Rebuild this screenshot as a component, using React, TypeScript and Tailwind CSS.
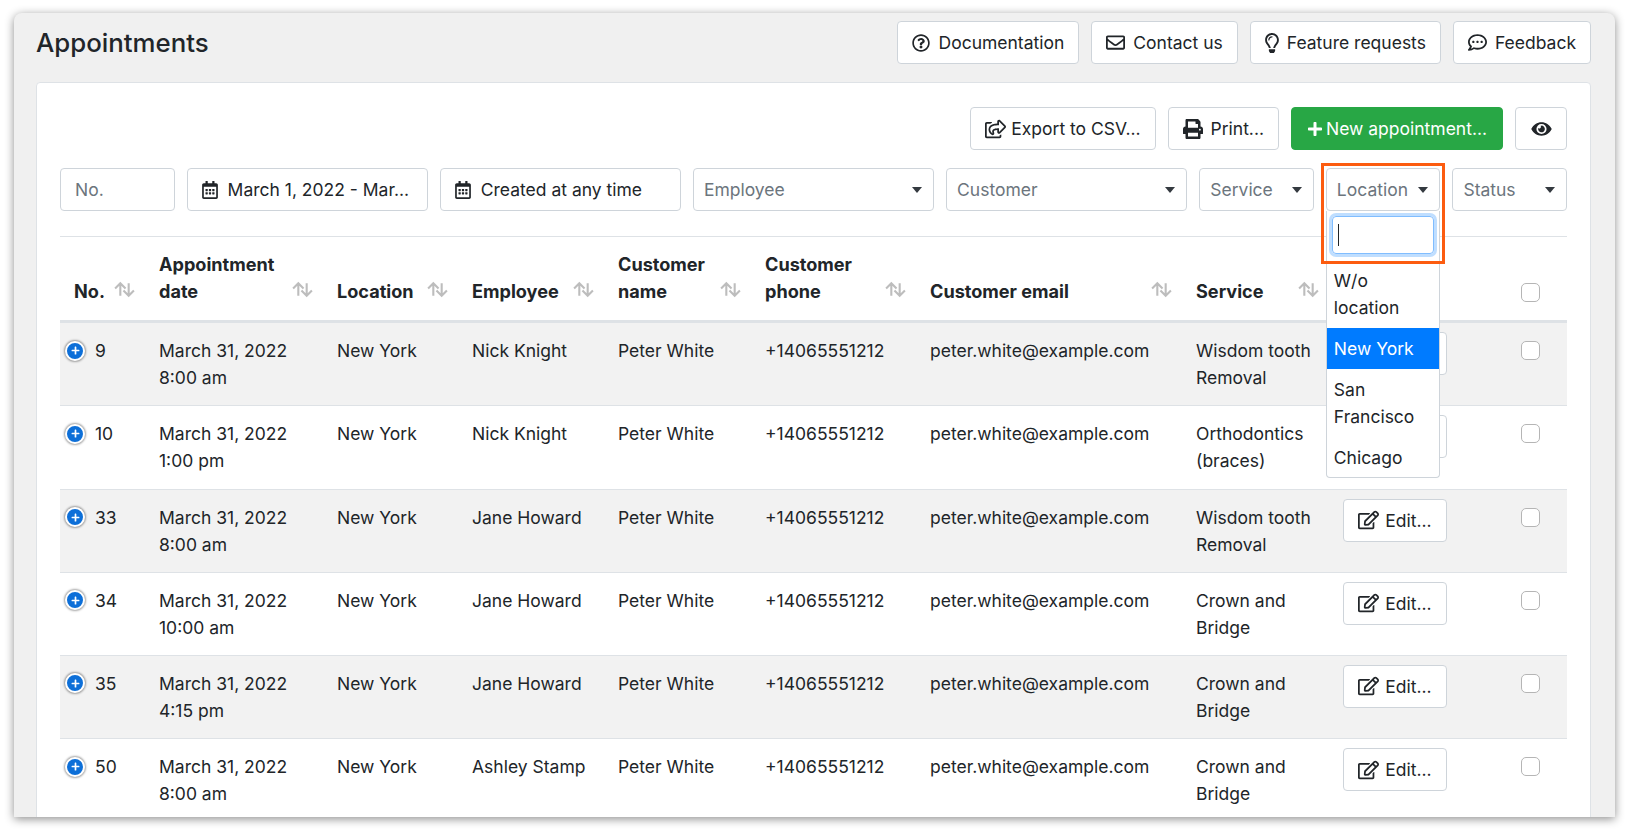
import type { ReactNode } from 'react';
import {
  FaRegQuestionCircle,
  FaRegEnvelope,
  FaRegLightbulb,
  FaRegCommentDots,
  FaRegShareSquare,
  FaPrint,
  FaPlus,
  FaEye,
  FaRegCalendarAlt,
  FaRegEdit,
} from 'react-icons/fa';

const rows = [
  { no: '9', date: 'March 31, 2022', time: '8:00 am', employee: 'Nick Knight', service: ['Wisdom tooth', 'Removal'] },
  { no: '10', date: 'March 31, 2022', time: '1:00 pm', employee: 'Nick Knight', service: ['Orthodontics', '(braces)'] },
  { no: '33', date: 'March 31, 2022', time: '8:00 am', employee: 'Jane Howard', service: ['Wisdom tooth', 'Removal'] },
  { no: '34', date: 'March 31, 2022', time: '10:00 am', employee: 'Jane Howard', service: ['Crown and', 'Bridge'] },
  { no: '35', date: 'March 31, 2022', time: '4:15 pm', employee: 'Jane Howard', service: ['Crown and', 'Bridge'] },
  { no: '50', date: 'March 31, 2022', time: '8:00 am', employee: 'Ashley Stamp', service: ['Crown and', 'Bridge'] },
];

function Btn({ icon, gap, children }: { icon: ReactNode; gap: string; children: ReactNode }) {
  return (
    <button className={`flex h-[43px] items-center rounded border border-[#ced4da] bg-white px-[14px] text-[#212529] ${gap}`}>
      {icon}
      {children}
    </button>
  );
}

function Caret() {
  return <span className="h-0 w-0 border-x-[5px] border-t-[6px] border-x-transparent border-t-[#343a40]" />;
}

function Select({ label, className }: { label: string; className: string }) {
  return (
    <div className={`flex h-[43px] items-center justify-between rounded border border-[#ced4da] bg-white pl-[10px] pr-[11px] text-[#6c757d] ${className}`}>
      {label}
      <Caret />
    </div>
  );
}

function DateFilter({ label }: { label: string }) {
  return (
    <div className="col-span-2 flex h-[43px] items-center gap-[10px] rounded border border-[#ced4da] bg-white px-[14px] text-[#212529]">
      <FaRegCalendarAlt className="h-[18px] w-[16px]" />
      {label}
    </div>
  );
}

function SortIcon() {
  return (
    <svg viewBox="0 0 22 18" className="mb-[6px] h-[19px] w-[23px] shrink-0" fill="none" stroke="#bdbdbd" strokeWidth="2">
      <path d="M7 15V3M2 8l5-5 5 5" />
      <path d="M15 3v12M10 10l5 5 5-5" />
    </svg>
  );
}

function Th({ lines, sort = true }: { lines: string[]; sort?: boolean }) {
  return (
    <th className="border-b-[3px] border-[#dee2e6] pb-[15px] pl-[14px] pr-[9px] pt-[14px] align-bottom text-left text-[18.1px] font-bold">
      <div className="flex items-end justify-between">
        <span>
          {lines.map((l) => (
            <span key={l} className="block">{l}</span>
          ))}
        </span>
        {sort && <SortIcon />}
      </div>
    </th>
  );
}

function Check() {
  return <span className="ml-[41px] block h-[19px] w-[19px] rounded-[5px] border border-[#b5b5b5] bg-white" />;
}

export default function App() {
  return (
    <div className="h-[832px] w-[1628px] overflow-hidden bg-white pl-[14px] pt-[13px] font-['Inter',sans-serif] text-[17.5px] leading-[27.1px] text-[#212529]">
      <div className="h-[804px] w-[1601px] overflow-hidden rounded-t-lg bg-[#f0f0f0] pl-[22px] pr-[24px] pt-2 shadow-[0_2px_10px_rgba(0,0,0,0.45)]">
        {/* Page header */}
        <header className="flex items-center justify-between">
          <h1 className="text-[25.8px] font-medium leading-[43px]">Appointments</h1>
          <div className="flex gap-3">
            <Btn gap="gap-[9px]" icon={<FaRegQuestionCircle className="h-[18px] w-[18px]" />}>Documentation</Btn>
            <Btn gap="gap-[8px]" icon={<FaRegEnvelope className="h-[19px] w-[19px]" />}>Contact us</Btn>
            <Btn gap="gap-[8px]" icon={<FaRegLightbulb className="h-[20px] w-[14px]" />}>Feature requests</Btn>
            <Btn gap="gap-[8px]" icon={<FaRegCommentDots className="h-[19px] w-[19px]" />}>Feedback</Btn>
          </div>
        </header>

        {/* Card */}
        <section className="mt-[18px] rounded border border-[#dee2e6] bg-white px-[23px] pt-[24px]">
          <div className="flex justify-end gap-3">
            <Btn gap="gap-[5px]" icon={<FaRegShareSquare className="h-[20px] w-[21px]" />}>Export to CSV...</Btn>
            <Btn gap="gap-[8px]" icon={<FaPrint className="h-[20px] w-[20px]" />}>Print...</Btn>
            <button className="flex h-[43px] w-[212px] items-center justify-center gap-[3px] rounded border border-[#28a745] bg-[#28a745] text-white">
              <FaPlus className="h-[16px] w-[16px]" />
              New appointment...
            </button>
            <button className="flex h-[43px] w-[52px] items-center justify-center rounded border border-[#ced4da] bg-white">
              <FaEye className="h-[18px] w-[21px]" />
            </button>
          </div>

          {/* Filters */}
          <div className="mt-[18px] grid grid-cols-12 gap-3">
            <div className="flex h-[43px] items-center rounded border border-[#ced4da] bg-white px-[14px] text-[#6c757d]">No.</div>
            <DateFilter label="March 1, 2022 - Mar..." />
            <DateFilter label="Created at any time" />
            <Select label="Employee" className="col-span-2" />
            <Select label="Customer" className="col-span-2" />
            <Select label="Service" className="" />
            <div className="relative">
              <Select label="Location" className="" />
              <div className="absolute inset-x-0 top-full z-10 rounded-b border border-t-0 border-[#ced4da] bg-white">
                <div className="px-[5px] pb-[6px] pt-[5px]">
                  <div className="flex h-[38px] items-center rounded border border-[#80bdff] px-[5px] shadow-[0_0_0_3px_rgba(0,123,255,0.25)]">
                    <span className="h-[22px] w-px bg-[#212529]" />
                  </div>
                </div>
                <div className="px-[7px] py-[7px]">W/o location</div>
                <div className="bg-[#007bff] px-[7px] py-[7px] text-white">New York</div>
                <div className="px-[7px] py-[7px]">San Francisco</div>
                <div className="px-[7px] pb-[5px] pt-[7px]">Chicago</div>
              </div>
              <span className="pointer-events-none absolute -left-[5px] -right-[5px] -top-[5px] z-20 h-[101px] border-[3px] border-[#fc5c10]" />
            </div>
            <Select label="Status" className="" />
          </div>

          {/* Table */}
          <table className="mt-[25px] w-full table-fixed border-collapse border-t border-[#dee2e6]">
            <colgroup>
              <col className="w-[85px]" />
              <col className="w-[178px]" />
              <col className="w-[135px]" />
              <col className="w-[146px]" />
              <col className="w-[147px]" />
              <col className="w-[165px]" />
              <col className="w-[266px]" />
              <col className="w-[147px]" />
              <col className="w-[151px]" />
              <col />
            </colgroup>
            <thead>
              <tr>
                <Th lines={['No.']} />
                <Th lines={['Appointment', 'date']} />
                <Th lines={['Location']} />
                <Th lines={['Employee']} />
                <Th lines={['Customer', 'name']} />
                <Th lines={['Customer', 'phone']} />
                <Th lines={['Customer email']} />
                <Th lines={['Service']} />
                <Th lines={[]} sort={false} />
                <th className="border-b-[3px] border-[#dee2e6] pb-[18px] align-bottom">
                  <Check />
                </th>
              </tr>
            </thead>
            <tbody>
              {rows.map((r, i) => (
                <tr key={r.no} className={i % 2 === 0 ? 'bg-[#f2f2f2]' : ''}>
                  <td className="border-t border-[#dee2e6] py-[14px] pl-[5px] align-top">
                    <div className="flex items-center gap-[10px]">
                      <span className="flex h-[20px] w-[20px] items-center justify-center rounded-full border-2 border-white bg-[#0d6fd8] text-white shadow-[0_0_2px_1px_rgba(0,0,0,0.35)]">
                        <FaPlus className="h-[9px] w-[9px]" />
                      </span>
                      {r.no}
                    </div>
                  </td>
                  <td className="border-t border-[#dee2e6] p-[14px] align-top">
                    {r.date}
                    <br />
                    {r.time}
                  </td>
                  <td className="border-t border-[#dee2e6] p-[14px] align-top">New York</td>
                  <td className="border-t border-[#dee2e6] p-[14px] align-top">{r.employee}</td>
                  <td className="border-t border-[#dee2e6] p-[14px] align-top">Peter White</td>
                  <td className="border-t border-[#dee2e6] p-[14px] align-top">+14065551212</td>
                  <td className="border-t border-[#dee2e6] p-[14px] align-top">peter.white@example.com</td>
                  <td className="border-t border-[#dee2e6] p-[14px] align-top">
                    {r.service[0]}
                    <br />
                    {r.service[1]}
                  </td>
                  <td className="border-t border-[#dee2e6] pl-[14px] pt-[9px] align-top">
                    <button className="flex h-[43px] w-[104px] items-center justify-center gap-[6px] rounded border border-[#ced4da] bg-white">
                      <FaRegEdit className="h-[20px] w-[21px]" />
                      Edit...
                    </button>
                  </td>
                  <td className="border-t border-[#dee2e6] pt-[18px] align-top">
                    <Check />
                  </td>
                </tr>
              ))}
            </tbody>
          </table>
        </section>
      </div>
    </div>
  );
}
